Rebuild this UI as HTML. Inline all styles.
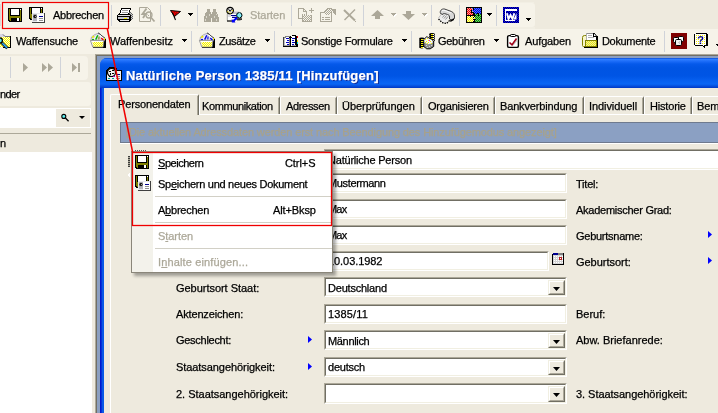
<!DOCTYPE html>
<html><head><meta charset="utf-8"><title>Natürliche Person</title>
<style>
html,body{margin:0;padding:0}
body{width:718px;height:413px;overflow:hidden;position:relative;background:#EEEADE;font:11px "Liberation Sans",sans-serif;color:#000}
.a{position:absolute}
svg{position:absolute;overflow:visible}
.t{position:absolute;white-space:nowrap;line-height:13px;height:13px;-webkit-text-stroke:.25px currentColor}
.dis{color:#ACA899}
.sep{position:absolute;width:1px;background:#D0D3D9}
.band{position:absolute;background:#F6F3E9}
.sunk{position:absolute;background:#fff;box-sizing:border-box;border:1px solid;border-color:#ACA899 #fff #fff #ACA899}
.sunk:before{content:"";position:absolute;left:0;top:0;right:0;bottom:0;border:1px solid;border-color:#716F64 #F1EFE2 #F1EFE2 #716F64}
.cbtn{position:absolute;right:1px;top:2px;bottom:1px;width:17px;background:#EEEADE;box-sizing:border-box;border:1px solid;border-color:#F1EFE2 #716F64 #716F64 #F1EFE2}
.cbtn:before{content:"";position:absolute;left:0;top:0;right:0;bottom:0;border:1px solid;border-color:#fff #ACA899 #ACA899 #fff}
.cbtn:after{content:"";position:absolute;left:4px;top:6px;width:7px;height:4px;background:#000;clip-path:polygon(0 0,100% 0,50% 100%)}
.arr{position:absolute;width:0;height:0;border:3px solid transparent;border-top:3px solid #000;border-bottom:none}
.barr{position:absolute;width:4px;height:7px;background:#0000FF;clip-path:polygon(0 0,100% 50%,0 100%)}
.tab{position:absolute;top:96px;height:18px;box-sizing:border-box;background:#EEEADE;border-top:1px solid #fff;border-left:1px solid #fff;border-right:1px solid #716F64;border-radius:2px 2px 0 0}
.tab:after{content:"";position:absolute;right:0;top:1px;bottom:0;width:1px;background:#ACA899}
.title{font:bold 13px "Liberation Sans",sans-serif;color:#fff;line-height:15px;height:15px;text-shadow:1px 1px 0 #0A2A9C}
.msep{position:absolute;left:155px;width:177px;height:1px;background:#D2D0C6}
u{text-decoration:underline}
</style></head><body>
<div id="w" style="position:absolute;left:0;top:0;width:718px;height:413px;will-change:transform">

<!-- toolbar bands -->
<div class="a" style="left:0;top:2px;width:534px;height:1px;background:#F2EFE4"></div>
<div class="a" style="left:0;top:27px;width:535px;height:2px;background:#F1EEE3"></div>
<div class="band" style="left:0;top:3px;width:535px;height:24px;border-radius:0 3px 3px 0"></div>
<div class="band" style="left:0;top:29px;width:718px;height:25px"></div>
<div class="a" style="left:0;top:4px;width:1px;height:22px;background:#D9D9D6"></div>

<svg style="left:8px;top:8px" width="14" height="14" viewBox="0 0 14 14" shape-rendering="crispEdges"><path d="M0 0h14v14H1v-1H0z" fill="#000"/><path d="M1 1h12v12H2v-1H1z" fill="#808000"/><rect x="2" y="1" width="10" height="7" fill="#000"/><rect x="3" y="1" width="8" height="6" fill="#fff"/><rect x="12" y="1" width="1" height="1" fill="#fff"/><rect x="3" y="10" width="9" height="4" fill="#000"/><rect x="9" y="10" width="2" height="3" fill="#fff"/></svg>
<svg style="left:29px;top:7px" width="16" height="16" viewBox="0 0 16 16" shape-rendering="crispEdges"><path d="M0 0h14v13H1v-1H0z" fill="#000"/><path d="M1 1h12v11H2v-1H1z" fill="#808000"/><rect x="2" y="1" width="10" height="6" fill="#000"/><rect x="3" y="1" width="8" height="5" fill="#fff"/><rect x="12" y="1" width="1" height="1" fill="#fff"/><rect x="3" y="6" width="13" height="10" fill="#404040"/><rect x="3" y="6" width="12" height="9" fill="#E8E8EC"/><rect x="4" y="7" width="4" height="7" fill="#B4B4BC"/><circle cx="6" cy="9.500" r="1.700" fill="#181818" shape-rendering="auto"/><rect x="6" y="9" width="1" height="1" fill="#A0A0A0"/><rect x="8" y="7" width="7" height="8" fill="#fff"/><rect x="10" y="9" width="4" height="1" fill="#000090"/><rect x="10" y="11" width="4" height="1" fill="#909090"/><rect x="10" y="13" width="4" height="1" fill="#909090"/></svg>
<div class="sep" style="left:111px;top:5px;height:21px"></div>
<div class="sep" style="left:160px;top:5px;height:21px"></div>
<div class="sep" style="left:197px;top:5px;height:21px"></div>
<div class="sep" style="left:291px;top:5px;height:21px"></div>
<div class="sep" style="left:363px;top:5px;height:21px"></div>
<div class="sep" style="left:431px;top:5px;height:21px"></div>
<div class="sep" style="left:459px;top:5px;height:21px"></div>
<div class="sep" style="left:496px;top:5px;height:21px"></div>
<svg style="left:117px;top:8px" width="16" height="14" viewBox="0 0 16 14" shape-rendering="crispEdges"><path d="M4.5 0.5h9l-2 6h-9z" fill="#fff" stroke="#000"/><path d="M5 2.5h6M4.5 4.5h6" stroke="#A0A0A0"/><path d="M12 4h2v1h1v1h1v5h-1v1h-1v1h-2z" fill="#606060"/><path d="M13 5h1M14 6h1M13 7h1M15 7h1M14 8h1M13 9h1M15 9h1M14 10h1M13 11h1" stroke="#D0D0D0"/><path d="M1 6h12v1h1v6h-1v1H2v-1H1v-1H0V7h1z" fill="#000"/><rect x="1" y="7" width="12" height="1" fill="#E0E0E0"/><rect x="1" y="9" width="11" height="2" fill="#C8C8D0"/><rect x="7" y="9.5" width="3" height="1" fill="#F0F000"/><rect x="3" y="12" width="9" height="1" fill="#E8E8E8"/></svg>
<svg style="left:139px;top:7px" width="16" height="15" viewBox="0 0 16 15"><path d="M0.5 0.5h8l3 3v11h-11z" fill="none" stroke="#ACA899"/><path d="M7.500 1.500L3.500 7h3L4 11" fill="none" stroke="#ACA899" stroke-width="1.900"/><circle cx="10" cy="8" r="3" fill="none" stroke="#ACA899" stroke-width="1.3"/><path d="M8.5 7.5l1.5 1.5" stroke="#ACA899"/><path d="M12 10.5l3.5 4" stroke="#ACA899" stroke-width="1.8"/></svg>
<svg style="left:170px;top:10px" width="11" height="11" viewBox="0 0 11 11"><path d="M0.5 0.5L10.5 1.5L4.5 6.5z" fill="#F00000" stroke="#000" stroke-width="1"/><path d="M2.5 2.5l3 7.5" stroke="#000" stroke-width="1.1"/><path d="M4 2h1M6 3h1M5 4h1" stroke="#700000"/></svg>
<svg style="left:188px;top:13px" width="5" height="3" viewBox="0 0 5 3" shape-rendering="crispEdges"><path d="M0 0h5v1H4v1H3v1H2V2H1V1H0z" fill="#000"/></svg>
<svg style="left:204px;top:9px" width="15" height="13" viewBox="0 0 15 13" shape-rendering="crispEdges"><path d="M3 0h3v3h1v10H0V9l1-3 1-3h1z" fill="#ACA899"/><path d="M9 0h3v3h1l1 3 1 3v4H8V3h1z" fill="#ACA899"/><rect x="7" y="5" width="1" height="4" fill="#ACA899"/><path d="M4 1h1M10 1h1M2 7h1v2H2zM10 7h1v2h-1zM1 10h1v2H1zM12 10h1v2h-1zM5 5h1v2H5zM12 5h1v1h-1z" fill="#DAD7CB" stroke="none"/></svg>
<svg style="left:226px;top:7px" width="17" height="16" viewBox="0 0 17 16"><path d="M7 4.500h6.500v4H7z" fill="#C6C6CE"/><rect x="1.300" y="7" width="9.500" height="6.600" fill="#fff"/><path d="M1.300 7v6.600" stroke="#909090" stroke-width=".8"/><path d="M2 8h3v2H2z" fill="#E0E0E6"/><path d="M1 14h8" stroke="#000" stroke-width="1.200"/><path d="M10.500 11.300h5.500v1.600h-5.500z" fill="#202020"/><path d="M11 13h3.500v.8H11z" fill="#909090"/><path d="M5 8.500h5.500M6 10.400h5" stroke="#000090" stroke-width="1.100"/><path d="M11 10.800L7.300 14" stroke="#0000FF" stroke-width="2.100"/><path d="M5.800 12v3.600h3.700z" fill="#0000FF"/><circle cx="4.100" cy="3.600" r="3.300" fill="#E4E4E4" stroke="#000" stroke-width="1.200"/><path d="M2.600 2.200l1.500 2.200 1.500-2.200" fill="none" stroke="#000" stroke-width="1"/><rect x="1.300" y="4.200" width="1.100" height="1.100" fill="#F0E000"/><rect x="5.800" y="3" width="1.100" height="1.100" fill="#F0E000"/><rect x="3.600" y="5.400" width="1.100" height="1.100" fill="#F0E000"/><circle cx="13.300" cy="8.300" r="2.700" fill="#48E4F4" stroke="#000" stroke-width="1"/><path d="M12.300 7.300h.9M13.800 7.300h.9M12.300 8.800h.9M13.800 8.800h.9M13 10h.9M13 6.200h.9" stroke="#fff" stroke-width=".8"/></svg>
<svg style="left:298px;top:8px" width="16" height="14" viewBox="0 0 16 14" shape-rendering="crispEdges"><path d="M0.5 0.5h5l3 3v7h-8z" fill="none" stroke="#ACA899"/><path d="M5.5 0.5v3h3" fill="none" stroke="#ACA899"/><path d="M11 2.5h5M13.5 0v5" stroke="#ACA899"/><path d="M4 6h4v1h6v7H4z" fill="#F6F3E9"/><path d="M4 6h1v1h-1zM6 6h1v1h-1z" fill="#ACA899"/><path d="M4 7h1v1h-1zM6 7h1v1h-1zM8 7h1v1h-1zM10 7h1v1h-1zM12 7h1v1h-1zM5 8h1v1h-1zM7 8h1v1h-1zM9 8h1v1h-1zM11 8h1v1h-1zM13 8h1v1h-1zM4 9h1v1h-1zM6 9h1v1h-1zM8 9h1v1h-1zM10 9h1v1h-1zM12 9h1v1h-1zM5 10h1v1h-1zM7 10h1v1h-1zM9 10h1v1h-1zM11 10h1v1h-1zM13 10h1v1h-1zM4 11h1v1h-1zM6 11h1v1h-1zM8 11h1v1h-1zM10 11h1v1h-1zM12 11h1v1h-1zM5 12h1v1h-1zM7 12h1v1h-1zM9 12h1v1h-1zM11 12h1v1h-1zM13 12h1v1h-1zM4 13h1v1h-1zM6 13h1v1h-1zM8 13h1v1h-1zM10 13h1v1h-1zM12 13h1v1h-1z" fill="#ACA899"/><path d="M4.5 14V6.5M4 13.5h10M13.5 7v7" stroke="#ACA899" fill="none"/></svg>
<svg style="left:320px;top:8px" width="16" height="14" viewBox="0 0 16 14" shape-rendering="crispEdges"><rect x="0.5" y="4.5" width="11" height="9" fill="none" stroke="#ACA899"/><path d="M2 9.5h2M5 9.5h5M2 11.5h2M5 11.5h5" stroke="#ACA899"/><path d="M8 0l4 4-4 3-4-3z" fill="#F6F3E9"/><rect x="8" y="0" width="1" height="1" fill="#ACA899"/><rect x="7" y="1" width="1" height="1" fill="#ACA899"/><rect x="9" y="1" width="1" height="1" fill="#ACA899"/><rect x="6" y="2" width="1" height="1" fill="#ACA899"/><rect x="8" y="2" width="1" height="1" fill="#ACA899"/><rect x="10" y="2" width="1" height="1" fill="#ACA899"/><rect x="5" y="3" width="1" height="1" fill="#ACA899"/><rect x="7" y="3" width="1" height="1" fill="#ACA899"/><rect x="9" y="3" width="1" height="1" fill="#ACA899"/><rect x="11" y="3" width="1" height="1" fill="#ACA899"/><rect x="4" y="4" width="1" height="1" fill="#ACA899"/><rect x="6" y="4" width="1" height="1" fill="#ACA899"/><rect x="8" y="4" width="1" height="1" fill="#ACA899"/><rect x="10" y="4" width="1" height="1" fill="#ACA899"/><rect x="5" y="5" width="1" height="1" fill="#ACA899"/><rect x="7" y="5" width="1" height="1" fill="#ACA899"/><rect x="9" y="5" width="1" height="1" fill="#ACA899"/><rect x="6" y="6" width="1" height="1" fill="#ACA899"/><rect x="8" y="6" width="1" height="1" fill="#ACA899"/><path d="M4 4l4-4h4" fill="none" stroke="#ACA899"/><path d="M11 1h5v6h-1z" fill="#ACA899"/></svg>
<svg style="left:343px;top:9px" width="13" height="13" viewBox="0 0 13 13"><path d="M1 1L12 11.5" stroke="#ACA899" stroke-width="2"/><path d="M12 0.5L1.5 11" stroke="#ACA899" stroke-width="1.4"/><rect x="12" y="12" width="1" height="1" fill="#ACA899"/></svg>
<svg style="left:371px;top:10px" width="13" height="9" viewBox="0 0 13 9"><path d="M6.5 0L13 6H9v3H4V6H0z" fill="#ACA899"/></svg>
<svg style="left:391px;top:13px" width="6" height="4" viewBox="0 0 6 4" shape-rendering="crispEdges"><path d="M1 1h5v1H5v1H4v1H3V3H2V2H1z" fill="#fff"/><path d="M0 0h5v1H4v1H3v1H2V2H1V1H0z" fill="#ACA899"/></svg>
<svg style="left:402px;top:11px" width="13" height="9" viewBox="0 0 13 9"><path d="M6.5 9L13 3H9V0H4v3H0z" fill="#ACA899"/></svg>
<svg style="left:422px;top:13px" width="6" height="4" viewBox="0 0 6 4" shape-rendering="crispEdges"><path d="M1 1h5v1H5v1H4v1H3V3H2V2H1z" fill="#fff"/><path d="M0 0h5v1H4v1H3v1H2V2H1V1H0z" fill="#ACA899"/></svg>
<svg style="left:438px;top:8px" width="17" height="15" viewBox="0 0 17 15"><path d="M0.500 10l4.500-6 7 3.500-4 7.500-4-1z" fill="#EDEDED"/><path d="M0.500 10l4.500-6" stroke="#B0B0B0" stroke-width=".8" fill="none"/><path d="M0.500 11l3.500 3.500 4.500 1 4.500-4.500" fill="none" stroke="#000" stroke-width="1.300" stroke-dasharray="1.500 1"/><path d="M4.500 9.500l2.500-3M6 10.500l2.500-3M7.500 11.500l2.500-3" stroke="#888" stroke-width=".9" fill="none"/><path d="M2.500 5.500c-1-2.500 1-5 4-4.500l7 2.500c2 1 3 2.500 3 4.500v2.500l-3.500 1.500-1.500-1v-2c0-1.500-.5-2-2-2.500l-3-1c-1-.2-1.500 0-1.500 1z" fill="#D8D8D8" stroke="#303030" stroke-width=".9"/><path d="M4 2.500c2-.8 6 1 9 2.500" stroke="#fff" stroke-width=".9" fill="none"/><path d="M12 12.500l4-2v1.500l-3.500 2z" fill="#000"/></svg>
<svg style="left:466px;top:7px" width="16" height="16" viewBox="0 0 16 16" shape-rendering="crispEdges"><rect width="16" height="16" fill="#000"/><path d="M1 1h6v2H5v3h2v2H5V7H3v1H1z" fill="#F00000"/><path d="M1 1h1v1h-1zM3 1h1v1h-1zM5 1h1v1h-1zM2 2h1v1h-1zM4 2h1v1h-1zM6 2h1v1h-1zM1 3h1v1h-1zM3 3h1v1h-1zM5 3h1v1h-1zM2 4h1v1h-1zM4 4h1v1h-1zM6 4h1v1h-1zM1 5h1v1h-1zM3 5h1v1h-1zM5 5h1v1h-1zM2 6h1v1h-1zM4 6h1v1h-1zM6 6h1v1h-1zM1 7h1v1h-1zM3 7h1v1h-1zM5 7h1v1h-1z" fill="#FFA0A0"/><path d="M8 1h7v6h-2V5h-1v2H9V5H8V4H6V3h2z" fill="#0000E0"/><path d="M6 1h1v1h-1zM8 1h1v1h-1zM10 1h1v1h-1zM12 1h1v1h-1zM14 1h1v1h-1zM7 2h1v1h-1zM9 2h1v1h-1zM11 2h1v1h-1zM13 2h1v1h-1zM6 3h1v1h-1zM8 3h1v1h-1zM10 3h1v1h-1zM12 3h1v1h-1zM14 3h1v1h-1zM7 4h1v1h-1zM9 4h1v1h-1zM11 4h1v1h-1zM13 4h1v1h-1zM6 5h1v1h-1zM8 5h1v1h-1zM10 5h1v1h-1zM12 5h1v1h-1zM14 5h1v1h-1zM7 6h1v1h-1zM9 6h1v1h-1zM11 6h1v1h-1zM13 6h1v1h-1z" fill="#4878FF"/><path d="M1 9h2v1h2V9h2v2h2v1H7v3H1z" fill="#F4F000"/><path d="M1 9h1v1h-1zM3 9h1v1h-1zM5 9h1v1h-1zM7 9h1v1h-1zM2 10h1v1h-1zM4 10h1v1h-1zM6 10h1v1h-1zM8 10h1v1h-1zM1 11h1v1h-1zM3 11h1v1h-1zM5 11h1v1h-1zM7 11h1v1h-1zM2 12h1v1h-1zM4 12h1v1h-1zM6 12h1v1h-1zM8 12h1v1h-1zM1 13h1v1h-1zM3 13h1v1h-1zM5 13h1v1h-1zM7 13h1v1h-1zM2 14h1v1h-1zM4 14h1v1h-1zM6 14h1v1h-1zM8 14h1v1h-1z" fill="#FFFFB0"/><path d="M10 7h2v1h1V7h2v8H9v-2h1v-1H9v-2h1V9h-1V8h1z" fill="#008800"/><path d="M9 7h1v1h-1zM11 7h1v1h-1zM13 7h1v1h-1zM10 8h1v1h-1zM12 8h1v1h-1zM14 8h1v1h-1zM9 9h1v1h-1zM11 9h1v1h-1zM13 9h1v1h-1zM10 10h1v1h-1zM12 10h1v1h-1zM14 10h1v1h-1zM9 11h1v1h-1zM11 11h1v1h-1zM13 11h1v1h-1zM10 12h1v1h-1zM12 12h1v1h-1zM14 12h1v1h-1zM9 13h1v1h-1zM11 13h1v1h-1zM13 13h1v1h-1zM10 14h1v1h-1zM12 14h1v1h-1zM14 14h1v1h-1z" fill="#70C870"/><path d="M7 1h1v2H7zM5 3h1v1H5zM5 5h3v1H5zM7 6h1v2H7zM1 8h6v1H5V8zM8 7h1v3H8zM9 8h1v1H9zM8 12h1v3H8zM11 6h1v1h-1zM12 8h1v1h-1z" fill="#000"/><rect x="4" y="7" width="1" height="1" fill="#F00000"/></svg>
<svg style="left:487px;top:13px" width="5" height="3" viewBox="0 0 5 3" shape-rendering="crispEdges"><path d="M0 0h5v1H4v1H3v1H2V2H1V1H0z" fill="#000"/></svg>
<svg style="left:503px;top:7px" width="16" height="16" viewBox="0 0 16 16" shape-rendering="crispEdges"><rect width="16" height="16" fill="#0000F0"/><path d="M0 0h1v1h-1zM2 0h1v1h-1zM4 0h1v1h-1zM6 0h1v1h-1zM8 0h1v1h-1zM10 0h1v1h-1zM12 0h1v1h-1zM14 0h1v1h-1zM1 1h1v1h-1zM3 1h1v1h-1zM5 1h1v1h-1zM7 1h1v1h-1zM9 1h1v1h-1zM11 1h1v1h-1zM13 1h1v1h-1zM15 1h1v1h-1zM0 2h1v1h-1zM2 2h1v1h-1zM4 2h1v1h-1zM6 2h1v1h-1zM8 2h1v1h-1zM10 2h1v1h-1zM12 2h1v1h-1zM14 2h1v1h-1zM1 3h1v1h-1zM3 3h1v1h-1zM5 3h1v1h-1zM7 3h1v1h-1zM9 3h1v1h-1zM11 3h1v1h-1zM13 3h1v1h-1zM15 3h1v1h-1zM0 4h1v1h-1zM2 4h1v1h-1zM4 4h1v1h-1zM6 4h1v1h-1zM8 4h1v1h-1zM10 4h1v1h-1zM12 4h1v1h-1zM14 4h1v1h-1zM1 5h1v1h-1zM3 5h1v1h-1zM5 5h1v1h-1zM7 5h1v1h-1zM9 5h1v1h-1zM11 5h1v1h-1zM13 5h1v1h-1zM15 5h1v1h-1zM0 6h1v1h-1zM2 6h1v1h-1zM4 6h1v1h-1zM6 6h1v1h-1zM8 6h1v1h-1zM10 6h1v1h-1zM12 6h1v1h-1zM14 6h1v1h-1zM1 7h1v1h-1zM3 7h1v1h-1zM5 7h1v1h-1zM7 7h1v1h-1zM9 7h1v1h-1zM11 7h1v1h-1zM13 7h1v1h-1zM15 7h1v1h-1zM0 8h1v1h-1zM2 8h1v1h-1zM4 8h1v1h-1zM6 8h1v1h-1zM8 8h1v1h-1zM10 8h1v1h-1zM12 8h1v1h-1zM14 8h1v1h-1zM1 9h1v1h-1zM3 9h1v1h-1zM5 9h1v1h-1zM7 9h1v1h-1zM9 9h1v1h-1zM11 9h1v1h-1zM13 9h1v1h-1zM15 9h1v1h-1zM0 10h1v1h-1zM2 10h1v1h-1zM4 10h1v1h-1zM6 10h1v1h-1zM8 10h1v1h-1zM10 10h1v1h-1zM12 10h1v1h-1zM14 10h1v1h-1zM1 11h1v1h-1zM3 11h1v1h-1zM5 11h1v1h-1zM7 11h1v1h-1zM9 11h1v1h-1zM11 11h1v1h-1zM13 11h1v1h-1zM15 11h1v1h-1zM0 12h1v1h-1zM2 12h1v1h-1zM4 12h1v1h-1zM6 12h1v1h-1zM8 12h1v1h-1zM10 12h1v1h-1zM12 12h1v1h-1zM14 12h1v1h-1zM1 13h1v1h-1zM3 13h1v1h-1zM5 13h1v1h-1zM7 13h1v1h-1zM9 13h1v1h-1zM11 13h1v1h-1zM13 13h1v1h-1zM15 13h1v1h-1zM0 14h1v1h-1zM2 14h1v1h-1zM4 14h1v1h-1zM6 14h1v1h-1zM8 14h1v1h-1zM10 14h1v1h-1zM12 14h1v1h-1zM14 14h1v1h-1zM1 15h1v1h-1zM3 15h1v1h-1zM5 15h1v1h-1zM7 15h1v1h-1zM9 15h1v1h-1zM11 15h1v1h-1zM13 15h1v1h-1zM15 15h1v1h-1z" fill="#000060"/><path d="M2 2h12v2H2z" fill="#fff"/><path d="M2 4h1v9H2zM2 13h10v1H2z" fill="#fff"/><path d="M13.500 6v6.500h-3z" fill="#fff" shape-rendering="auto"/><path d="M4 6.300l1.500 5.700 2-4 2 4 1.800-5.700" fill="none" stroke="#fff" stroke-width="1.900" stroke-linejoin="miter" shape-rendering="auto"/></svg>
<svg style="left:526px;top:18px" width="5" height="3" viewBox="0 0 5 3" shape-rendering="crispEdges"><path d="M0 0h5v1H4v1H3v1H2V2H1V1H0z" fill="#000"/></svg>
<div class="sep" style="left:191px;top:31px;height:21px"></div>
<div class="sep" style="left:274px;top:31px;height:21px"></div>
<div class="sep" style="left:411px;top:31px;height:21px"></div>
<div class="sep" style="left:664px;top:31px;height:21px"></div>
<svg style="left:0px;top:34px" width="12" height="15" viewBox="0 0 12 15" shape-rendering="crispEdges"><path d="M0 0h3l2 2h5v11H0z" fill="#D8D6E4"/><path d="M0 3h10v10H0z" fill="#F8F400"/><path d="M0 3h1v1h-1zM2 3h1v1h-1zM4 3h1v1h-1zM6 3h1v1h-1zM8 3h1v1h-1zM1 4h1v1h-1zM3 4h1v1h-1zM5 4h1v1h-1zM7 4h1v1h-1zM9 4h1v1h-1zM0 5h1v1h-1zM2 5h1v1h-1zM4 5h1v1h-1zM6 5h1v1h-1zM8 5h1v1h-1zM1 6h1v1h-1zM3 6h1v1h-1zM5 6h1v1h-1zM7 6h1v1h-1zM9 6h1v1h-1zM0 7h1v1h-1zM2 7h1v1h-1zM4 7h1v1h-1zM6 7h1v1h-1zM8 7h1v1h-1zM1 8h1v1h-1zM3 8h1v1h-1zM5 8h1v1h-1zM7 8h1v1h-1zM9 8h1v1h-1zM0 9h1v1h-1zM2 9h1v1h-1zM4 9h1v1h-1zM6 9h1v1h-1zM8 9h1v1h-1zM1 10h1v1h-1zM3 10h1v1h-1zM5 10h1v1h-1zM7 10h1v1h-1zM9 10h1v1h-1zM0 11h1v1h-1zM2 11h1v1h-1zM4 11h1v1h-1zM6 11h1v1h-1zM8 11h1v1h-1zM1 12h1v1h-1zM3 12h1v1h-1zM5 12h1v1h-1zM7 12h1v1h-1zM9 12h1v1h-1z" fill="#FFFFD8"/><path d="M3 0.500l2 2h5" fill="none" stroke="#707070" shape-rendering="auto"/><path d="M10 2h1v12H3v-1h7z" fill="#000"/><circle cx="-0.300" cy="6.500" r="2.700" fill="#60E8F0" stroke="#000" stroke-width="1.300" shape-rendering="auto"/><path d="M2 9l5.300 5.300" stroke="#000" stroke-width="3" shape-rendering="auto"/><path d="M2.300 9.300l4.700 4.700" stroke="#20A0FF" stroke-width="1.400" shape-rendering="auto"/><path d="M3 9.300l4 4" stroke="#60E8F0" stroke-width=".6" shape-rendering="auto"/></svg>
<svg style="left:90px;top:33px" width="16" height="15" viewBox="0 0 16 15" shape-rendering="crispEdges"><path d="M15 5.500h.800V15H3v-1h10l.600-5.500 1-1.500z" fill="#000"/><path d="M0.800 7.500L1.500 4l3-2.300L8.300 0.200l6.400 5.300-.4 2.500z" fill="#DAD8E6" stroke="#9A98A8" stroke-width=".7" shape-rendering="auto"/><path d="M8.300 0L15.300 5.600" stroke="#000" stroke-width="1" fill="none" shape-rendering="auto"/><path d="M2.300 4.800l1.700-1.800" stroke="#F0EC00" stroke-width="1.500" shape-rendering="auto"/><rect x="2" y="6" width="2" height="1" fill="#00B000"/><path d="M4.300 6.300L7 2" stroke="#fff" stroke-width="1.100" shape-rendering="auto"/><path d="M5.700 6.600L7.700 2.300" stroke="#00B000" stroke-width="1.400" shape-rendering="auto"/><path d="M8.800 6.500L9.100 3.500" stroke="#8C8C00" stroke-width="1.100" shape-rendering="auto"/><path d="M9.300 1.800L13.300 5.300" stroke="#fff" stroke-width="1.300" shape-rendering="auto"/><path d="M11.300 5L14 7.700" stroke="#F00000" stroke-width="1.400" shape-rendering="auto"/><rect x="14" y="5" width="1" height="1.500" fill="#F0EC00"/><path d="M0.400 7.400h13.400l-.8 6.600H2.800z" fill="#fff" stroke="#8C8C8C" stroke-width=".9" shape-rendering="auto"/><path d="M2.500 9h10.700l-.6 4.500H3.500z" fill="#F4F000" shape-rendering="auto"/><path d="M3 9h1v1h-1zM5 9h1v1h-1zM7 9h1v1h-1zM9 9h1v1h-1zM11 9h1v1h-1zM4 10h1v1h-1zM6 10h1v1h-1zM8 10h1v1h-1zM10 10h1v1h-1zM12 10h1v1h-1zM3 11h1v1h-1zM5 11h1v1h-1zM7 11h1v1h-1zM9 11h1v1h-1zM11 11h1v1h-1zM4 12h1v1h-1zM6 12h1v1h-1zM8 12h1v1h-1zM10 12h1v1h-1zM12 12h1v1h-1z" fill="#FFFFB8"/></svg>
<svg style="left:182px;top:39px" width="5" height="3" viewBox="0 0 5 3" shape-rendering="crispEdges"><path d="M0 0h5v1H4v1H3v1H2V2H1V1H0z" fill="#000"/></svg>
<svg style="left:199px;top:33px" width="16" height="15" viewBox="0 0 16 15" shape-rendering="crispEdges"><path d="M15 5.500h.800V15H3v-1h10l.600-5.500 1-1.500z" fill="#000"/><path d="M0.800 7.500L1.500 4l3-2.300L8.300 0.200l6.400 5.300-.4 2.500z" fill="#DAD8E6" stroke="#9A98A8" stroke-width=".7" shape-rendering="auto"/><path d="M8.300 0L15.300 5.600" stroke="#000" stroke-width="1" fill="none" shape-rendering="auto"/><path d="M2.300 4.800l1.700-1.800" stroke="#F0EC00" stroke-width="1.500" shape-rendering="auto"/><rect x="2" y="6" width="2" height="1" fill="#0000E0"/><path d="M4.300 6.300L7 2" stroke="#fff" stroke-width="1.100" shape-rendering="auto"/><path d="M5.700 6.600L7.700 2.300" stroke="#0000E0" stroke-width="1.400" shape-rendering="auto"/><path d="M8.800 6.500L9.100 3.500" stroke="#0000E0" stroke-width="1.100" shape-rendering="auto"/><path d="M9.300 1.800L13.300 5.300" stroke="#fff" stroke-width="1.300" shape-rendering="auto"/><path d="M11.300 5L14 7.700" stroke="#0000E0" stroke-width="1.400" shape-rendering="auto"/><rect x="14" y="5" width="1" height="1.500" fill="#F0EC00"/><path d="M0.400 7.400h13.400l-.8 6.600H2.800z" fill="#fff" stroke="#8C8C8C" stroke-width=".9" shape-rendering="auto"/><path d="M2.500 9h10.700l-.6 4.500H3.500z" fill="#F4F000" shape-rendering="auto"/><path d="M3 9h1v1h-1zM5 9h1v1h-1zM7 9h1v1h-1zM9 9h1v1h-1zM11 9h1v1h-1zM4 10h1v1h-1zM6 10h1v1h-1zM8 10h1v1h-1zM10 10h1v1h-1zM12 10h1v1h-1zM3 11h1v1h-1zM5 11h1v1h-1zM7 11h1v1h-1zM9 11h1v1h-1zM11 11h1v1h-1zM4 12h1v1h-1zM6 12h1v1h-1zM8 12h1v1h-1zM10 12h1v1h-1zM12 12h1v1h-1z" fill="#FFFFB8"/></svg>
<svg style="left:265px;top:39px" width="5" height="3" viewBox="0 0 5 3" shape-rendering="crispEdges"><path d="M0 0h5v1H4v1H3v1H2V2H1V1H0z" fill="#000"/></svg>
<svg style="left:283px;top:35px" width="15" height="12" viewBox="0 0 15 12" shape-rendering="crispEdges"><path d="M0 2h7v9H0z" fill="#fff" stroke="none"/><path d="M8 1h6v10H8z" fill="#fff"/><path d="M0.500 2.500h2v-1h4v9" fill="none" stroke="#808080"/><path d="M0.500 2v9" stroke="#404040"/><path d="M1.500 3v8" stroke="#C0C0C0"/><path d="M7 1h1v11H7z" fill="#000"/><path d="M6 2h1v1H6zM8 2h1v1H8z" fill="#000"/><path d="M3 3h3M4 5h2M3 7h3M4 9h2M9 3h3M9 5h2M9 7h3M9 9h2" stroke="#0000C0"/><path d="M8.500 0.500h4v10" fill="none" stroke="#000"/><rect x="13" y="1" width="1" height="10" fill="#000"/><rect x="14" y="1" width="1" height="2" fill="#F00000"/><rect x="14" y="3" width="1" height="2" fill="#fff"/><rect x="14" y="5" width="1" height="2" fill="#F0E000"/><rect x="14" y="7" width="1" height="2" fill="#00D8E8"/><rect x="14" y="9" width="1" height="2" fill="#000"/><path d="M0 11h15v1H0z" fill="#000"/><path d="M1 10h5v1H1zM9 10h4v1H9z" fill="#A0A0A0"/></svg>
<svg style="left:402px;top:39px" width="5" height="3" viewBox="0 0 5 3" shape-rendering="crispEdges"><path d="M0 0h5v1H4v1H3v1H2V2H1V1H0z" fill="#000"/></svg>
<svg style="left:419px;top:33px" width="16" height="15" viewBox="0 0 16 15" shape-rendering="crispEdges"><ellipse cx="2.8" cy="6" rx="2.8" ry="1.400" fill="#000" shape-rendering="auto"/><ellipse cx="2.8" cy="8" rx="2.8" ry="1.400" fill="#000" shape-rendering="auto"/><ellipse cx="2.8" cy="10" rx="2.8" ry="1.400" fill="#000" shape-rendering="auto"/><ellipse cx="2.8" cy="12" rx="2.8" ry="1.400" fill="#000" shape-rendering="auto"/><ellipse cx="2.8" cy="14" rx="2.8" ry="1.400" fill="#000" shape-rendering="auto"/><rect x="1.6" y="5.5" width="2" height="1" fill="#F4EC00"/><rect x="3.7" y="5.5" width="1" height="1" fill="#fff"/><rect x="1.6" y="7.5" width="2" height="1" fill="#F4EC00"/><rect x="3.7" y="7.5" width="1" height="1" fill="#fff"/><rect x="1.6" y="9.5" width="2" height="1" fill="#F4EC00"/><rect x="3.7" y="9.5" width="1" height="1" fill="#fff"/><rect x="1.6" y="11.5" width="2" height="1" fill="#F4EC00"/><rect x="3.7" y="11.5" width="1" height="1" fill="#fff"/><rect x="1.6" y="13.5" width="2" height="1" fill="#F4EC00"/><rect x="3.7" y="13.5" width="1" height="1" fill="#fff"/><ellipse cx="13" cy="1.5" rx="3" ry="1.400" fill="#000" shape-rendering="auto"/><ellipse cx="13" cy="3.5" rx="3" ry="1.400" fill="#000" shape-rendering="auto"/><ellipse cx="13" cy="5.5" rx="3" ry="1.400" fill="#000" shape-rendering="auto"/><ellipse cx="13" cy="7.5" rx="3" ry="1.400" fill="#000" shape-rendering="auto"/><rect x="11.8" y="1" width="2" height="1" fill="#F4EC00"/><rect x="13.9" y="1" width="1" height="1" fill="#fff"/><rect x="11.8" y="3" width="2" height="1" fill="#F4EC00"/><rect x="13.9" y="3" width="1" height="1" fill="#fff"/><rect x="11.8" y="5" width="2" height="1" fill="#F4EC00"/><rect x="13.9" y="5" width="1" height="1" fill="#fff"/><rect x="11.8" y="7" width="2" height="1" fill="#F4EC00"/><rect x="13.9" y="7" width="1" height="1" fill="#fff"/><path d="M4.800 6.500l3-2.800 2.500 1.600 3 1.200 1.400 2.500v4.500l-3.500 2.300h-3.500l-3-2.500z" fill="#8C8C8C" stroke="#000" stroke-width="1" shape-rendering="auto"/><path d="M5.300 6.700l2.600-2.400 2.300 1.500 2.800 1.100 1 2-1.500 1.600-3.500.8-3.500-1.500z" fill="#F6F6F6" shape-rendering="auto"/><path d="M6 6h1M8 5h1M7 8h1M9 7h1M6 9h1M9 9h1M11 8h1M12 10h1M8 10h1" stroke="#F4EC00"/><rect x="10" y="7" width="1.400" height="1.400" fill="#F000F0"/><path d="M7 12h1M10 13h1M8 14h1M12 12h1" stroke="#D0D0D0"/></svg>
<svg style="left:494px;top:39px" width="5" height="3" viewBox="0 0 5 3" shape-rendering="crispEdges"><path d="M0 0h5v1H4v1H3v1H2V2H1V1H0z" fill="#000"/></svg>
<svg style="left:507px;top:34px" width="12" height="14" viewBox="0 0 12 14"><rect x="0.600" y="1.600" width="10.800" height="11.800" rx="1.500" fill="#fff" stroke="#000" stroke-width="1.400"/><rect x="3.500" y="0.500" width="5" height="2" rx=".8" fill="#fff" stroke="#000"/><path d="M3.500 9.500l2 2" stroke="#C8C8C8" stroke-width="1.200"/><path d="M6 11l4.500-5.500" stroke="#C8C8C8" stroke-width="1.200"/><path d="M2.500 8.500l2.500 2.300L9.500 4.500" fill="none" stroke="#A00018" stroke-width="1.500"/></svg>
<svg style="left:582px;top:33px" width="16" height="15" viewBox="0 0 16 15" shape-rendering="crispEdges"><path d="M15 3h1v12H2v-1h13z" fill="#000"/><path d="M14.500 3.500v4" stroke="#000"/><path d="M0.500 4.500q0-2 2-2h2v11h-3q-1 0-1-1z" fill="#F8F6C8" stroke="#808000" shape-rendering="auto"/><path d="M4 0h8l2 2.500V8H4z" fill="#fff"/><path d="M4 0.500h8" stroke="#909090"/><path d="M4.500 0v7" stroke="#B0B0B0"/><path d="M11.500 0v3h3" fill="none" stroke="#000"/><path d="M12 0l2.500 3" stroke="#000" shape-rendering="auto"/><path d="M6 2.500h4M6 4.500h6" stroke="#B0B0B0"/><rect x="3.500" y="7.500" width="11" height="6" fill="#F4F000" stroke="#808000"/><path d="M4 8h1v1h-1zM6 8h1v1h-1zM8 8h1v1h-1zM10 8h1v1h-1zM12 8h1v1h-1zM5 9h1v1h-1zM7 9h1v1h-1zM9 9h1v1h-1zM11 9h1v1h-1zM13 9h1v1h-1zM4 10h1v1h-1zM6 10h1v1h-1zM8 10h1v1h-1zM10 10h1v1h-1zM12 10h1v1h-1zM5 11h1v1h-1zM7 11h1v1h-1zM9 11h1v1h-1zM11 11h1v1h-1zM13 11h1v1h-1zM4 12h1v1h-1zM6 12h1v1h-1zM8 12h1v1h-1zM10 12h1v1h-1zM12 12h1v1h-1z" fill="#E4E4B4"/></svg>
<svg style="left:671px;top:33px" width="16" height="16" viewBox="0 0 16 16" shape-rendering="crispEdges"><rect width="16" height="16" fill="#800000"/><rect x="2.500" y="4.500" width="5" height="5" rx="1.200" fill="#fff" stroke="#000" shape-rendering="auto"/><rect x="7.500" y="3.500" width="5" height="5" rx="1.200" fill="#fff" stroke="#000" shape-rendering="auto"/><rect x="4.500" y="6.500" width="6" height="6" rx="1.200" fill="#F0F0F0" stroke="#000" shape-rendering="auto"/><path d="M6 10l3-2v3z" fill="#C8C8C8"/></svg>
<svg style="left:694px;top:33px" width="14" height="16" viewBox="0 0 14 16" shape-rendering="crispEdges"><path d="M2 0h11v1h1v12h-3v3l-3-3H1v-1H0V1h1z" fill="#000"/><rect x="1" y="1" width="11" height="11" fill="#fff"/><rect x="2" y="2" width="1" height="1" fill="#F4F000"/><rect x="4" y="2" width="1" height="1" fill="#F4F000"/><rect x="6" y="2" width="1" height="1" fill="#F4F000"/><rect x="8" y="2" width="1" height="1" fill="#F4F000"/><rect x="10" y="2" width="1" height="1" fill="#F4F000"/><rect x="2" y="4" width="1" height="1" fill="#F4F000"/><rect x="4" y="4" width="1" height="1" fill="#F4F000"/><rect x="6" y="4" width="1" height="1" fill="#F4F000"/><rect x="8" y="4" width="1" height="1" fill="#F4F000"/><rect x="10" y="4" width="1" height="1" fill="#F4F000"/><rect x="2" y="6" width="1" height="1" fill="#F4F000"/><rect x="4" y="6" width="1" height="1" fill="#F4F000"/><rect x="6" y="6" width="1" height="1" fill="#F4F000"/><rect x="8" y="6" width="1" height="1" fill="#F4F000"/><rect x="10" y="6" width="1" height="1" fill="#F4F000"/><rect x="2" y="8" width="1" height="1" fill="#F4F000"/><rect x="4" y="8" width="1" height="1" fill="#F4F000"/><rect x="6" y="8" width="1" height="1" fill="#F4F000"/><rect x="8" y="8" width="1" height="1" fill="#F4F000"/><rect x="10" y="8" width="1" height="1" fill="#F4F000"/><rect x="2" y="10" width="1" height="1" fill="#F4F000"/><rect x="4" y="10" width="1" height="1" fill="#F4F000"/><rect x="6" y="10" width="1" height="1" fill="#F4F000"/><rect x="8" y="10" width="1" height="1" fill="#F4F000"/><rect x="10" y="10" width="1" height="1" fill="#F4F000"/><path d="M8 12h2v2z" fill="#fff"/><text x="6.500" y="10.500" font-family="Liberation Sans,sans-serif" font-weight="bold" font-size="11" fill="#000090" text-anchor="middle" shape-rendering="auto">?</text></svg>
<svg style="left:716px;top:44px" width="5" height="3" viewBox="0 0 5 3" shape-rendering="crispEdges"><path d="M0 0h5v1H4v1H3v1H2V2H1V1H0z" fill="#000"/></svg>

<!-- left panel -->
<div class="band" style="left:0;top:56px;width:88px;height:24px;border-radius:0 4px 4px 0"></div>
<div class="sep" style="left:10px;top:57px;height:21px"></div>
<div class="sep" style="left:60px;top:57px;height:21px"></div>
<svg style="left:23px;top:63px" width="60" height="9" viewBox="0 0 60 9" fill="#ACA899"><path d="M0 0l5 4.5L0 9zM19 0l5 4.5L19 9zM25 0l5 4.5L25 9zM49 0l5 4.5L49 9zM55 0h2v9h-2z"/></svg>
<div class="band" style="left:0;top:82px;width:91px;height:24px;border-radius:0 3px 3px 0"></div>
<div class="a" style="left:0;top:108px;width:91px;height:20px;background:#fff"></div>
<div class="a" style="left:56px;top:109px;width:34px;height:18px;background:#EEEADE"></div>
<svg style="left:61px;top:113px" width="9" height="9" viewBox="0 0 9 9"><circle cx="2.8" cy="3.4" r="2" fill="#5FF0F0" stroke="#000" stroke-width="1.1"/><path d="M4.4 5L7.6 8.2" stroke="#000" stroke-width="1.3"/></svg>
<div class="arr" style="left:79px;top:116px"></div>
<div class="a" style="left:0;top:133px;width:91px;height:19px;background:#EEEADE;border-top:1px solid #ACA899;box-sizing:border-box"></div>
<div class="a" style="left:0;top:152px;width:92px;height:261px;background:#fff"></div>

<!-- MDI area -->
<div class="a" style="left:95px;top:54px;width:623px;height:359px;background:#8B9FC0;border-left:1px solid #ACA899;border-top:1px solid #ACA899"></div>
<div class="a" style="left:96px;top:55px;width:622px;height:358px;border-left:1px solid #716F64;border-top:1px solid #716F64"></div>
<!-- child window -->
<div class="a" style="left:100px;top:58px;width:618px;height:355px;background:#0054E3;border-radius:7px 0 0 0"></div>
<div class="a" style="left:100px;top:58px;width:618px;height:30px;border-radius:7px 0 0 0;background:linear-gradient(#0A4CD8 0,#2E7EFF 1.5px,#1E6EFA 3px,#0559EA 6px,#0054E3 10px,#0055E5 18px,#0760F0 23px,#0A66F4 26px,#0650DE 28px,#0038C4 30px)"></div>
<div class="a" style="left:100px;top:88px;width:4px;height:325px;background:linear-gradient(90deg,#0019CF 0,#0019CF 1px,#0A4EE0 2px,#0A62EC 3px,#0552E0 4px)"></div>
<div class="t title" style="left:126px;top:68px;letter-spacing:0.224px">Natürliche Person 1385/11 [Hinzufügen]</div>
<svg style="left:106px;top:67px" width="16" height="14" viewBox="0 0 16 14" shape-rendering="crispEdges"><rect x="0" y="3" width="16" height="11" fill="#000"/><rect x="1" y="4" width="14" height="9" fill="#F0F0F0"/><path d="M3 0h6l2 2v1H1V2z" fill="#000"/><circle cx="5.500" cy="5.500" r="4" fill="#F4F4F4" stroke="#000" stroke-width="1.200" shape-rendering="auto"/><path d="M3 4h2v1H3zM6 3h2v1H6zM4 6h1v2H4zM6 6h2v1H6zM3 9h4v1H3z" fill="#000"/><rect x="11" y="7" width="3" height="1" fill="#000090"/><rect x="10" y="9" width="4" height="1" fill="#909090"/><rect x="10" y="11" width="4" height="1" fill="#909090"/><rect x="7" y="9" width="2" height="1" fill="#C000C0"/><rect x="2" y="11" width="2" height="1" fill="#00A0A0"/><rect x="6" y="11" width="2" height="1" fill="#00A0A0"/></svg>
<div class="a" style="left:104px;top:88px;width:614px;height:325px;background:#EEEADE"></div>

<!-- tab page -->
<div class="a" style="left:110px;top:114px;width:608px;height:299px;border-left:1px solid #fff;border-top:1px solid #fff"></div>
<!-- tabs -->
<div class="tab" style="left:199px;width:81px"></div>
<div class="tab" style="left:280px;width:57px"></div>
<div class="tab" style="left:337px;width:85px"></div>
<div class="tab" style="left:422px;width:73px"></div>
<div class="tab" style="left:495px;width:89px"></div>
<div class="tab" style="left:584px;width:60px"></div>
<div class="tab" style="left:644px;width:48px"></div>
<div class="tab" style="left:692px;width:60px"></div>
<div class="tab" style="left:110px;width:89px;top:94px;height:21px"></div>

<!-- info bar -->
<div class="a" style="left:120px;top:122px;width:598px;height:21px;background:#8BA0C3;box-sizing:border-box;border:1px solid #6F7A8E;border-right:none"></div><div class="a" style="left:120px;top:143px;width:598px;height:1px;background:#fff"></div>

<!-- fields -->
<div class="sunk" style="left:324px;top:149px;width:400px;height:21px"></div>
<div class="sunk" style="left:324px;top:173px;width:243px;height:20px"></div>
<div class="sunk" style="left:324px;top:199px;width:243px;height:20px"></div>
<div class="sunk" style="left:324px;top:225px;width:243px;height:20px"></div>
<div class="sunk" style="left:324px;top:251px;width:225px;height:20px"></div>
<div class="sunk" style="left:324px;top:277px;width:243px;height:20px"><div class="cbtn"></div></div>
<div class="sunk" style="left:324px;top:304px;width:243px;height:20px"></div>
<div class="sunk" style="left:324px;top:330px;width:243px;height:20px"><div class="cbtn"></div></div>
<div class="sunk" style="left:324px;top:357px;width:243px;height:20px"><div class="cbtn"></div></div>
<div class="sunk" style="left:324px;top:383px;width:243px;height:21px"><div class="cbtn"></div></div>
<!-- calendar icon -->
<svg style="left:552px;top:253px" width="12" height="12" viewBox="0 0 12 12" shape-rendering="crispEdges"><rect width="12" height="12" fill="#000"/><rect x="1" y="0" width="10" height="11" fill="#D4D4D4"/><rect x="0" y="0" width="1" height="1" fill="#EEEADE"/><rect x="1" y="0" width="5" height="2" fill="#000090"/><rect x="6" y="0" width="5" height="2" fill="#808080"/><rect x="2" y="3" width="1" height="1" fill="#fff"/><rect x="4" y="3" width="1" height="1" fill="#fff"/><rect x="6" y="3" width="1" height="1" fill="#fff"/><rect x="8" y="3" width="1" height="1" fill="#fff"/><rect x="10" y="3" width="1" height="1" fill="#fff"/><rect x="2" y="5" width="1" height="1" fill="#fff"/><rect x="4" y="5" width="1" height="1" fill="#fff"/><rect x="6" y="5" width="1" height="1" fill="#fff"/><rect x="8" y="5" width="1" height="1" fill="#fff"/><rect x="10" y="5" width="1" height="1" fill="#fff"/><rect x="2" y="7" width="1" height="1" fill="#fff"/><rect x="4" y="7" width="1" height="1" fill="#fff"/><rect x="6" y="7" width="1" height="1" fill="#fff"/><rect x="8" y="7" width="1" height="1" fill="#fff"/><rect x="10" y="7" width="1" height="1" fill="#fff"/><rect x="2" y="9" width="1" height="1" fill="#fff"/><rect x="4" y="9" width="1" height="1" fill="#fff"/><rect x="6" y="9" width="1" height="1" fill="#fff"/><rect x="8" y="9" width="1" height="1" fill="#fff"/><rect x="10" y="9" width="1" height="1" fill="#fff"/><rect x="7" y="4" width="3" height="3" fill="#B82020"/><rect x="8" y="5" width="1" height="1" fill="#fff"/></svg>

<div class="barr" style="left:308px;top:336px"></div>
<div class="barr" style="left:308px;top:363px"></div>
<div class="barr" style="left:708px;top:231px"></div>
<div class="barr" style="left:708px;top:257px"></div>

<div class="t" style="left:53px;top:9px;letter-spacing:-0.247px;">Abbrechen</div>
<div class="t dis" style="left:250px;top:9px;letter-spacing:-0.024px;">Starten</div>
<div class="t" style="left:16px;top:35px;letter-spacing:-0.136px;">Waffensuche</div>
<div class="t" style="left:110px;top:35px;">Waffenbesitz</div>
<div class="t" style="left:219px;top:35px;letter-spacing:-0.363px;">Zusätze</div>
<div class="t" style="left:301px;top:35px;letter-spacing:-0.239px;">Sonstige Formulare</div>
<div class="t" style="left:438px;top:35px;letter-spacing:-0.280px;">Gebühren</div>
<div class="t" style="left:525px;top:35px;letter-spacing:-0.126px;">Aufgaben</div>
<div class="t" style="left:602px;top:35px;letter-spacing:-0.330px;">Dokumente</div>
<div class="t" style="left:0px;top:88px;letter-spacing:-0.658px;">nder</div>
<div class="t" style="left:0px;top:137px;">n</div>
<div class="t" style="left:118px;top:98px;letter-spacing:-0.163px;">Personendaten</div>
<div class="t" style="left:202px;top:100px;letter-spacing:-0.394px;">Kommunikation</div>
<div class="t" style="left:286px;top:100px;letter-spacing:-0.336px;">Adressen</div>
<div class="t" style="left:342px;top:100px;letter-spacing:-0.053px;">Überprüfungen</div>
<div class="t" style="left:428px;top:100px;letter-spacing:-0.190px;">Organisieren</div>
<div class="t" style="left:500px;top:100px;letter-spacing:-0.158px;">Bankverbindung</div>
<div class="t" style="left:589px;top:100px;letter-spacing:-0.084px;">Individuell</div>
<div class="t" style="left:650px;top:100px;letter-spacing:-0.187px;">Historie</div>
<div class="t" style="left:697px;top:100px;letter-spacing:-0.136px;">Bemerkungen</div>
<div class="t" style="left:126px;top:126px;letter-spacing:-0.114px;color:#A8A28A">[Die aktuellen Adressdaten werden erst nach Beendigung des Hinzufügemodus angezeigt]</div>
<div class="t" style="left:328px;top:154px;letter-spacing:-0.214px;">Natürliche Person</div>
<div class="t" style="left:328px;top:177px;letter-spacing:-0.354px;">Mustermann</div>
<div class="t" style="left:328px;top:203px;letter-spacing:-0.794px;">Max</div>
<div class="t" style="left:328px;top:229px;letter-spacing:-0.794px;">Max</div>
<div class="t" style="left:328px;top:255px;letter-spacing:-0.066px;">10.03.1982</div>
<div class="t" style="left:328px;top:282px;letter-spacing:-0.214px;">Deutschland</div>
<div class="t" style="left:328px;top:308px;letter-spacing:0.135px;">1385/11</div>
<div class="t" style="left:328px;top:335px;letter-spacing:-0.329px;">Männlich</div>
<div class="t" style="left:328px;top:361px;letter-spacing:-0.233px;">deutsch</div>
<div class="t" style="left:176px;top:282px;letter-spacing:-0.033px;">Geburtsort Staat:</div>
<div class="t" style="left:176px;top:308px;letter-spacing:-0.155px;">Aktenzeichen:</div>
<div class="t" style="left:176px;top:334px;letter-spacing:-0.281px;">Geschlecht:</div>
<div class="t" style="left:176px;top:361px;letter-spacing:-0.070px;">Staatsangehörigkeit:</div>
<div class="t" style="left:176px;top:388px;letter-spacing:-0.019px;">2. Staatsangehörigkeit:</div>
<div class="t" style="left:576px;top:178px;letter-spacing:-0.223px;">Titel:</div>
<div class="t" style="left:576px;top:204px;letter-spacing:-0.259px;">Akademischer Grad:</div>
<div class="t" style="left:576px;top:230px;letter-spacing:-0.259px;">Geburtsname:</div>
<div class="t" style="left:576px;top:256px;letter-spacing:-0.030px;">Geburtsort:</div>
<div class="t" style="left:576px;top:308px;">Beruf:</div>
<div class="t" style="left:576px;top:334px;">Abw. Briefanrede:</div>
<div class="t" style="left:576px;top:388px;letter-spacing:-0.045px;">3. Staatsangehörigkeit:</div>

<!-- peeking bits -->
<svg style="left:127px;top:150px" width="20" height="28" viewBox="0 0 20 28" shape-rendering="crispEdges"><path d="M8 0h1M10 0h1M12 0h1M14 0h1M16 0h1M18 0h1" stroke="#555" transform="translate(0,.5)"/><path d="M1 6h2M1 8h2M1 10h2M1 12h2M1 14h2M1 16h2" stroke="#3C3C3C" transform="translate(0,.5)"/><path d="M1 7h2M1 9h2M1 11h2M1 13h2M1 15h2" stroke="#A8A494" transform="translate(0,.5)"/><path d="M0 25l3-2v4z" fill="#fff"/></svg>
<!-- context menu -->
<div class="a" style="left:131px;top:151px;width:202px;height:122px;background:#fff;border:1px solid #8A867A;box-sizing:border-box;box-shadow:3px 3px 3px rgba(0,0,0,.33)"></div>
<div class="a" style="left:132px;top:152px;width:21px;height:120px;background:#F3F2EB"></div>
<div class="msep" style="top:196px"></div>
<div class="msep" style="top:222px"></div>
<div class="msep" style="top:248px"></div>
<svg style="left:135px;top:155px" width="14" height="14" viewBox="0 0 14 14" shape-rendering="crispEdges"><path d="M0 0h14v14H1v-1H0z" fill="#000"/><path d="M1 1h12v12H2v-1H1z" fill="#808000"/><rect x="2" y="1" width="10" height="7" fill="#000"/><rect x="3" y="1" width="8" height="6" fill="#fff"/><rect x="12" y="1" width="1" height="1" fill="#fff"/><rect x="3" y="10" width="9" height="4" fill="#000"/><rect x="9" y="10" width="2" height="3" fill="#fff"/></svg>
<svg style="left:135px;top:175px" width="16" height="16" viewBox="0 0 16 16" shape-rendering="crispEdges"><path d="M0 0h14v13H1v-1H0z" fill="#000"/><path d="M1 1h12v11H2v-1H1z" fill="#808000"/><rect x="2" y="1" width="10" height="6" fill="#000"/><rect x="3" y="1" width="8" height="5" fill="#fff"/><rect x="12" y="1" width="1" height="1" fill="#fff"/><rect x="3" y="6" width="13" height="10" fill="#404040"/><rect x="3" y="6" width="12" height="9" fill="#E8E8EC"/><rect x="4" y="7" width="4" height="7" fill="#B4B4BC"/><circle cx="6" cy="9.500" r="1.700" fill="#181818" shape-rendering="auto"/><rect x="6" y="9" width="1" height="1" fill="#A0A0A0"/><rect x="8" y="7" width="7" height="8" fill="#fff"/><rect x="10" y="9" width="4" height="1" fill="#000090"/><rect x="10" y="11" width="4" height="1" fill="#909090"/><rect x="10" y="13" width="4" height="1" fill="#909090"/></svg>
<div class="t" style="left:158px;top:157px;letter-spacing:-0.472px;"><u>S</u>peichern</div>
<div class="t" style="left:285px;top:157px;letter-spacing:-0.079px;">Ctrl+S</div>
<div class="t" style="left:158px;top:178px;letter-spacing:-0.278px;">Sp<u>e</u>ichern und neues Dokument</div>
<div class="t" style="left:158px;top:204px;letter-spacing:-0.237px;">A<u>b</u>brechen</div>
<div class="t" style="left:273px;top:204px;letter-spacing:-0.115px;">Alt+Bksp</div>
<div class="t dis" style="left:158px;top:230px;letter-spacing:-0.069px;">S<u>t</u>arten</div>
<div class="t dis" style="left:158px;top:256px;letter-spacing:0.143px;">I<u>n</u>halte einfügen...</div>

<!-- annotations -->
<svg style="left:0;top:0" width="718" height="413" viewBox="0 0 718 413">
<rect x="2.5" y="2.5" width="106" height="26" fill="none" stroke="#F00000" stroke-width="1.2"/>
<line x1="107.3" y1="28.5" x2="132.6" y2="152" stroke="#F00000" stroke-width="1.5"/>
<rect x="132.5" y="152.5" width="199" height="73" fill="none" stroke="#F00000" stroke-width="1.3"/>
</svg>
</div>
</body></html>
